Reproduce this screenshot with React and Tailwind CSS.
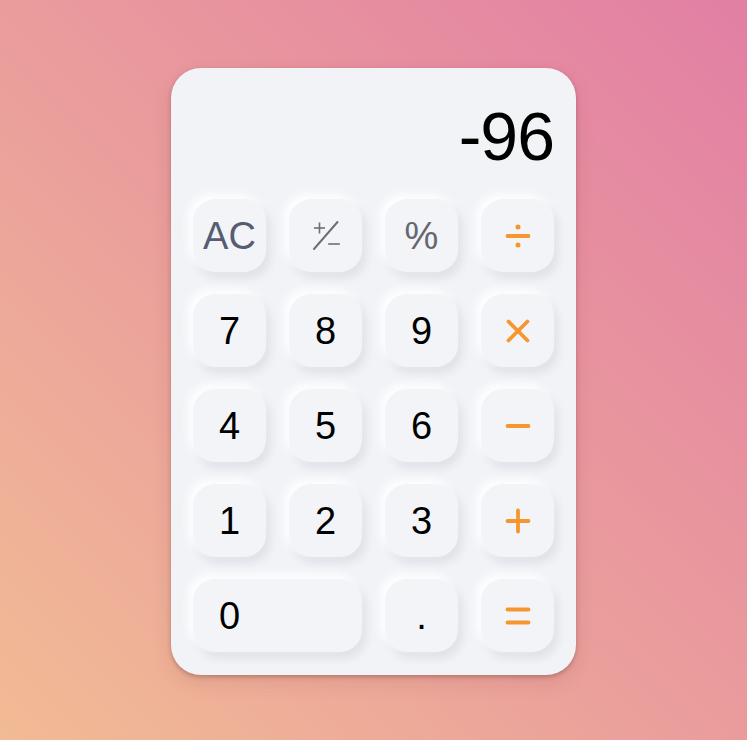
import React from "react";

const ORANGE = "#f5972e";

function OpIcon({ kind }) {
  return (
    <svg width="26" height="26" viewBox="0 0 26 26" fill="none" stroke={ORANGE} strokeWidth="3.8" strokeLinecap="round">
      {kind === "div" && (
        <>
          <line x1="2.5" y1="13" x2="23.5" y2="13" />
          <circle cx="13" cy="4" r="2.5" fill={ORANGE} stroke="none" />
          <circle cx="13" cy="22" r="2.5" fill={ORANGE} stroke="none" />
        </>
      )}
      {kind === "mul" && (
        <>
          <line x1="3.5" y1="3.5" x2="22.5" y2="22.5" />
          <line x1="22.5" y1="3.5" x2="3.5" y2="22.5" />
        </>
      )}
      {kind === "sub" && <line x1="2.5" y1="13" x2="23.5" y2="13" />}
      {kind === "add" && (
        <>
          <line x1="2.5" y1="13" x2="23.5" y2="13" />
          <line x1="13" y1="2.5" x2="13" y2="23.5" />
        </>
      )}
      {kind === "eq" && (
        <>
          <line x1="2.5" y1="6.5" x2="23.5" y2="6.5" />
          <line x1="2.5" y1="19.5" x2="23.5" y2="19.5" />
        </>
      )}
    </svg>
  );
}

function PlusMinus() {
  return (
    <svg width="32" height="32" viewBox="0 0 32 32" fill="none" stroke="#6b6e78">
      <line x1="4" y1="29" x2="27.5" y2="2" strokeWidth="2" strokeLinecap="round" />
      <line x1="4" y1="8" x2="15" y2="8" strokeWidth="1.6" />
      <line x1="9.5" y1="2.5" x2="9.5" y2="13.5" strokeWidth="1.6" />
      <line x1="18.2" y1="24" x2="29.8" y2="24" strokeWidth="1.6" />
    </svg>
  );
}

function Key({ children, className = "", color = "text-black" }) {
  return (
    <button
      className={`h-[73px] rounded-[22px] bg-[#f3f4f8] flex items-center justify-center text-[38px] leading-none ${color} shadow-[-5px_-5px_10px_rgba(255,255,255,0.95),4px_6px_10px_rgba(40,40,70,0.09)] ${className}`}
    >
      {children}
    </button>
  );
}

export default function App() {
  return (
    <div
      className="h-screen w-full flex items-center justify-center bg-linear-to-tr from-[#f1bb94] via-[#ea9c9c] to-[#e27fa4]"
      style={{ fontFamily: '"Liberation Sans", Arial, sans-serif' }}
    >
      <div className="mt-[3px] w-[405px] h-[607px] rounded-[30px] bg-[#f2f3f7] px-[22px] shadow-[0_2px_4px_rgba(90,40,30,0.3),0_8px_20px_rgba(120,40,60,0.12)] flex flex-col">
        <div className="h-[131px] pt-[4px] flex items-center justify-end">
          <span className="text-[68px] leading-none text-black tracking-[-1px]">-96</span>
        </div>
        <div className="grid grid-cols-[repeat(4,73px)] gap-x-[23px] gap-y-[22px]">
          <Key color="text-[#575d70]">AC</Key>
          <Key>
            <PlusMinus />
          </Key>
          <Key color="text-[#65676e]" className="text-[36px]">%</Key>
          <Key>
            <OpIcon kind="div" />
          </Key>

          <Key>7</Key>
          <Key>8</Key>
          <Key>9</Key>
          <Key>
            <OpIcon kind="mul" />
          </Key>

          <Key>4</Key>
          <Key>5</Key>
          <Key>6</Key>
          <Key>
            <OpIcon kind="sub" />
          </Key>

          <Key>1</Key>
          <Key>2</Key>
          <Key>3</Key>
          <Key>
            <OpIcon kind="add" />
          </Key>

          <Key className="col-span-2 justify-start pl-[26px]">0</Key>
          <Key>.</Key>
          <Key>
            <OpIcon kind="eq" />
          </Key>
        </div>
      </div>
    </div>
  );
}
